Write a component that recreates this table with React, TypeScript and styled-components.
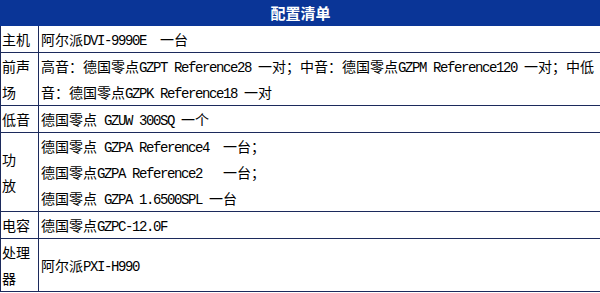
import React from 'react';
import styled, { createGlobalStyle } from 'styled-components';

const GlobalStyle = createGlobalStyle`
  html, body {
    margin: 0;
    padding: 0;
    background: #fff;
    overflow: hidden;
  }
`;

const Table = styled.table`
  width: 601px;
  border-collapse: collapse;
  table-layout: fixed;
  font-family: "Noto Sans CJK SC", "Noto Sans", sans-serif;
  font-size: 14px;
  color: #000;
`;

const LabelCol = styled.col`
  width: 38px;
`;

const HeadCell = styled.th`
  padding: 0;
  background: #0a3597;
  border: 1px solid #0a3597;
  color: #fff;
  font-size: 15px;
  font-weight: bold;
  line-height: 24px;
  text-align: center;
`;

const LabelCell = styled.td`
  padding: 0 0 0 1px;
  border: 1px solid #1c2a5c;
  line-height: 26px;
  vertical-align: middle;
  white-space: pre-line;
`;

const ValueCell = styled.td`
  padding: 0 0 0 2px;
  border: 1px solid #1c2a5c;
  line-height: 26px;
  vertical-align: middle;
  white-space: pre-wrap;
`;

const Line = styled.div`
  height: 26px;
`;

const WrapLine = styled.div`
  line-height: 26px;
`;

const Latin = styled.span`
  font-family: "Liberation Mono", monospace;
  letter-spacing: -1.4px;
  line-height: 14px;
`;

const Mixed = ({ text }: { text: string }) => (
  <>
    {text.split(/([\x20-\x7e]+)/).map((part, i) =>
      /[\x20-\x7e]/.test(part) ? <Latin key={i}>{part}</Latin> : part
    )}
  </>
);

interface Item {
  label: string;
  lines: string[];
}

const items: Item[] = [
  { label: '主机', lines: ['阿尔派DVI-9990E  一台'] },
  {
    label: '前声场',
    lines: [
      '高音：德国零点GZPT Reference28 一对；中音：德国零点GZPM Reference120 一对；中低音：德国零点GZPK Reference18 一对',
    ],
  },
  { label: '低音', lines: ['德国零点 GZUW 300SQ 一个'] },
  {
    label: '功\n放',
    lines: [
      '德国零点 GZPA Reference4  一台；',
      '德国零点GZPA Reference2   一台；',
      '德国零点 GZPA 1.6500SPL 一台',
    ],
  },
  { label: '电容', lines: ['德国零点GZPC-12.0F'] },
  { label: '处理器', lines: ['阿尔派PXI-H990'] },
];

export default function App() {
  return (
    <>
      <GlobalStyle />
      <Table>
        <colgroup>
          <LabelCol />
          <col />
        </colgroup>
        <thead>
          <tr>
            <HeadCell colSpan={2}>配置清单</HeadCell>
          </tr>
        </thead>
        <tbody>
          {items.map((item) => (
            <tr key={item.label}>
              <LabelCell>{item.label}</LabelCell>
              <ValueCell>
                {item.lines.map((line, i) =>
                  item.lines.length > 1 ? (
                    <Line key={i}>
                      <Mixed text={line} />
                    </Line>
                  ) : (
                    <WrapLine key={i}>
                      <Mixed text={line} />
                    </WrapLine>
                  )
                )}
              </ValueCell>
            </tr>
          ))}
        </tbody>
      </Table>
    </>
  );
}
